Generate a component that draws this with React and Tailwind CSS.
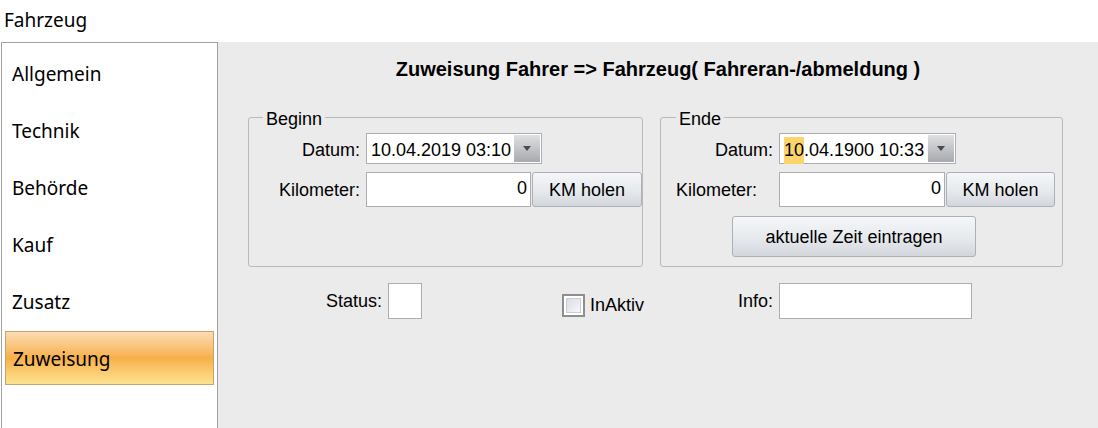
import React from 'react';

const navItems = ['Allgemein', 'Technik', 'Behörde', 'Kauf', 'Zusatz', 'Zuweisung'];

const DateBox = ({ children, width }) => (
    <div className={`flex h-[31px] border border-[#abadb3] bg-white ${width}`}>
        <div className="flex-1 flex items-center pl-[4px] pt-[3px] whitespace-nowrap">{children}</div>
        <div className="w-[26px] my-[1px] mr-[1px] flex items-center justify-center bg-gradient-to-b from-[#dfe0e2] to-[#a7aaae]">
            <div className="w-0 h-0 border-l-[4px] border-r-[4px] border-t-[5px] border-l-transparent border-r-transparent border-t-[#4a4a4a]" />
        </div>
    </div>
);

const WinButton = ({ children, className }) => (
    <button className={`rounded-[3px] border border-[#acb0b8] bg-gradient-to-b from-[#f4f6f8] via-[#e8ebee] to-[#d3d7dc] pt-[2px] text-[18px] text-black ${className}`}>
        {children}
    </button>
);

const KmInput = ({ width }) => (
    <div className={`h-[35px] border border-[#abadb3] bg-white flex items-start justify-end pr-[3px] pt-[2px] ${width}`}>0</div>
);

const App = () => {
    return (
        <div className="w-[1098px] h-[428px] overflow-hidden bg-white text-black" style={{ fontFamily: '"Liberation Sans", Arial, sans-serif' }}>
            {/* header */}
            <div className="h-[42px] pl-[4px] pt-[6px] text-[19px] font-['Noto_Sans',sans-serif]">Fahrzeug</div>

            <div className="flex h-[386px]">
                {/* nav */}
                <div className="ml-[1px] w-[217px] border border-b-0 border-[#a0a0a0] bg-white pt-[3px] font-['Noto_Sans',sans-serif] text-[19px]">
                    {navItems.map((item) => (
                        <div
                            key={item}
                            className={`mx-[3px] mb-[3px] h-[54px] flex items-center pl-[7px] pt-[2px] ${item === 'Zuweisung'
                                ? 'border border-[#c9a36e] bg-gradient-to-b from-[#fbdcb0] via-[#f7b048] to-[#fde38f] pl-[6px]'
                                : ''
                                }`}
                        >
                            {item}
                        </div>
                    ))}
                </div>

                {/* content */}
                <div className="flex-1 bg-[#ebebeb]">
                    <div className="h-[52px] flex items-center justify-center pt-[1px] text-[20px] font-bold">
                        Zuweisung Fahrer =&gt; Fahrzeug( Fahreran-/abmeldung )
                    </div>

                    <div className="flex mt-[23px] ml-[30px] gap-[17px] text-[18px]">
                        {/* Beginn */}
                        <div className="relative w-[395px] h-[150px] border border-[#b9b9b9] rounded-[3px] pt-[15px]">
                            <div className="absolute -top-[12px] left-[14px] px-[3px] bg-[#ebebeb]">Beginn</div>
                            <div className="flex items-center">
                                <div className="w-[111px] text-right pt-[3px]">Datum:</div>
                                <div className="ml-[6px]">
                                    <DateBox width="w-[176px]">10.04.2019 03:10</DateBox>
                                </div>
                            </div>
                            <div className="flex items-center mt-[8px]">
                                <div className="w-[111px] text-right pt-[2px]">Kilometer:</div>
                                <div className="ml-[6px] flex">
                                    <KmInput width="w-[165px]" />
                                    <WinButton className="w-[110px] h-[35px] ml-[1px]">KM holen</WinButton>
                                </div>
                            </div>
                        </div>

                        {/* Ende */}
                        <div className="relative w-[403px] h-[150px] border border-[#b9b9b9] rounded-[3px] pt-[15px]">
                            <div className="absolute -top-[12px] left-[15px] px-[3px] bg-[#ebebeb]">Ende</div>
                            <div className="flex items-center">
                                <div className="w-[112px] text-right pt-[3px]">Datum:</div>
                                <div className="ml-[6px]">
                                    <DateBox width="w-[177px]">
                                        <span className="bg-[#fdd46b]">10</span>.04.1900 10:33
                                    </DateBox>
                                </div>
                            </div>
                            <div className="flex items-center mt-[8px]">
                                <div className="w-[118px] pl-[15px] pt-[2px]">Kilometer:</div>
                                <div className="flex">
                                    <KmInput width="w-[166px]" />
                                    <WinButton className="w-[109px] h-[35px] ml-[1px]">KM holen</WinButton>
                                </div>
                            </div>
                            <WinButton className="w-[244px] h-[41px] ml-[71px] mt-[9px]">aktuelle Zeit eintragen</WinButton>
                        </div>
                    </div>

                    {/* bottom row */}
                    <div className="flex items-center mt-[16px] h-[36px] text-[18px]">
                        <div className="w-[164px] text-right">Status:</div>
                        <div className="ml-[6px] w-[34px] h-[36px] border border-[#abadb3] bg-white" />
                        <div className="ml-[140px] w-[23px] h-[23px] mt-[8px] border-[2px] border-[#8e8e8e] bg-white p-[2px]">
                            <div className="w-full h-full border border-[#c8ccd2] bg-gradient-to-br from-[#d9dde3] to-[#f6f7f9]" />
                        </div>
                        <div className="ml-[5px] mt-[8px] w-[110px]">InAktiv</div>
                        <div className="w-[73px] text-right">Info:</div>
                        <div className="ml-[6px] w-[193px] h-[36px] border border-[#abadb3] bg-white" />
                    </div>
                </div>
            </div>
        </div>
    );
};

export default App;
